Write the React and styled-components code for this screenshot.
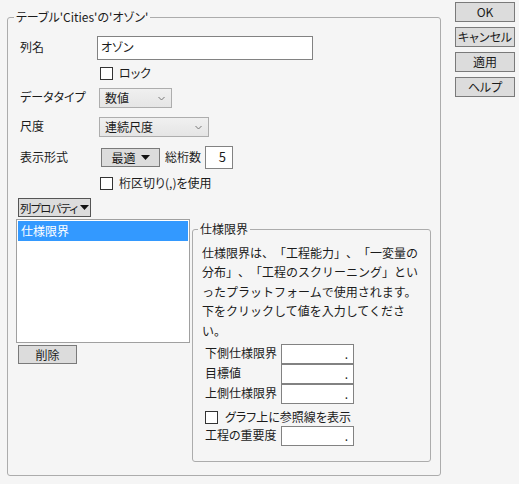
import React from 'react';
import styled, { createGlobalStyle } from 'styled-components';

const Global = createGlobalStyle`
  html, body { margin: 0; padding: 0; background: #f5f5f5; }
  body {
    font-family: "Noto Sans CJK JP", "Noto Sans", sans-serif;
    font-size: 12px;
    color: #1b1b1b;
    font-feature-settings: "palt";
  }
  * { box-sizing: border-box; }
`;

const Page = styled.div`
  display: flex;
  align-items: flex-start;
  width: 519px;
  height: 484px;
  padding-left: 7px;
`;

const Group = styled.div`
  position: relative;
  flex: none;
  border: 1px solid #acacac;
  border-radius: 3px;
  margin-top: ${p => p.$top}px;
  margin-left: ${p => p.$left || 0}px;
  width: ${p => p.$w}px;
  height: ${p => p.$h}px;
  padding: ${p => p.$pad};
`;

const GroupTitle = styled.span`
  position: absolute;
  top: -9px;
  left: ${p => p.$left}px;
  background: #f5f5f5;
  padding: 0 2px;
  line-height: 16px;
  white-space: nowrap;
`;

const Row = styled.div`
  display: flex;
  align-items: center;
  margin-top: ${p => p.$mt || 0}px;
  padding-left: ${p => p.$pl || 0}px;
  height: ${p => (p.$h ? `${p.$h}px` : 'auto')};
`;

const Label = styled.div`
  flex: none;
  width: ${p => p.$w}px;
  padding-bottom: 2px;
  line-height: 16px;
  white-space: nowrap;
`;

const TextBox = styled.div`
  flex: none;
  width: ${p => p.$w}px;
  height: ${p => p.$h}px;
  margin-left: ${p => p.$ml || 0}px;
  background: #fff;
  border: 1px solid #828282;
  display: flex;
  justify-content: ${p => (p.$right ? 'flex-end' : 'flex-start')};
  align-items: ${p => (p.$right ? 'flex-end' : 'flex-start')};
  padding: ${p => p.$pad || '1px 3px'};
  line-height: 16px;
  font-size: ${p => p.$fs || 12}px;
`;

const Dot = styled.span`
  font-size: 12px;
  line-height: 12px;
  color: #222;
`;

const CheckRow = styled.label`
  display: flex;
  align-items: center;
  margin-top: ${p => p.$mt || 0}px;
  margin-left: ${p => p.$ml || 0}px;
  height: 16px;
  line-height: 16px;
  white-space: nowrap;
`;

const Box = styled.span`
  flex: none;
  width: 13px;
  height: 13px;
  border: 1px solid #333;
  background: #fff;
  margin-right: ${p => p.$gap || 6}px;
`;

const Select = styled.div`
  flex: none;
  width: ${p => p.$w}px;
  height: 20px;
  margin-left: ${p => p.$ml || 0}px;
  border: 1px solid #adadad;
  background: linear-gradient(#f0f0f0, #e5e5e5);
  display: flex;
  align-items: center;
  justify-content: space-between;
  padding: 0 6px 0 5px;
  line-height: 16px;
`;

const Button = styled.div`
  flex: none;
  width: ${p => p.$w}px;
  height: ${p => p.$h || 20}px;
  margin-top: ${p => p.$mt || 0}px;
  margin-left: ${p => p.$ml || 0}px;
  border: 1px solid ${p => p.$border || '#7a7a7a'};
  background: #dcdcdc;
  display: flex;
  align-items: center;
  justify-content: ${p => (p.$start ? 'flex-start' : 'center')};
  gap: ${p => p.$gap || 5}px;
  padding: ${p => (p.$start ? '0 0 0 1px' : '0')};
  line-height: 16px;
  font-size: ${p => (p.$tight ? '11.5px' : '12px')};
  letter-spacing: ${p => (p.$tight ? '-0.9px' : 'normal')};
  white-space: nowrap;
  overflow: hidden;
`;

const SideColumn = styled.div`
  display: flex;
  flex-direction: column;
  gap: 5px;
  margin-top: 2px;
  margin-left: 14px;
`;

const Bottom = styled.div`
  display: flex;
  align-items: flex-start;
  margin-top: 2px;
`;

const LeftCol = styled.div`
  display: flex;
  flex-direction: column;
  align-items: flex-start;
`;

const List = styled.div`
  width: 174px;
  height: 124px;
  border: 1px solid #a0a0a0;
  background: #fff;
  padding: 1px;
`;

const ListItem = styled.div`
  height: 20px;
  line-height: 20px;
  padding-left: 3px;
  background: ${p => (p.$selected ? '#3399ff' : 'transparent')};
  color: ${p => (p.$selected ? '#fff' : 'inherit')};
`;

const Para = styled.p`
  margin: 0;
  line-height: 19.4px;
  white-space: nowrap;
  font-feature-settings: normal;
  text-spacing-trim: space-all;
`;

const Fields = styled.div`
  margin-top: 4px;
  display: flex;
  flex-direction: column;
`;

const Inline = styled.span`
  margin-left: ${p => p.$ml || 0}px;
  white-space: nowrap;
  line-height: 16px;
  padding-bottom: 1px;
`;

const Triangle = () => (
  <svg width="9" height="5" viewBox="0 0 9 5" style={{ flex: 'none' }}>
    <path d="M0 0 L9 0 L4.5 5 Z" fill="#111" />
  </svg>
);

const Chevron = () => (
  <svg width="7" height="5" viewBox="0 0 7 5">
    <path d="M0.5 1 L3.5 4 L6.5 1" fill="none" stroke="#777" strokeWidth="1" />
  </svg>
);

const NumField = ({ label }) => (
  <Row $pl={3}>
    <Label $w={76}>{label}</Label>
    <TextBox $w={73} $h={20} $right $pad="0 5px 3px 3px">
      <Dot>.</Dot>
    </TextBox>
  </Row>
);

export default function App() {
  return (
    <>
      <Global />
      <Page>
        <Group $top={17} $w={434} $h={459} $pad="0 0 0 8px">
          <GroupTitle $left={6}>テーブル'Cities'の'オゾン'</GroupTitle>

          <Row $mt={18} $pl={4} $h={24}>
            <Label $w={77}>列名</Label>
            <TextBox $w={216} $h={24} $pad="2px 3px">オゾン</TextBox>
          </Row>

          <CheckRow $mt={5} $ml={84}>
            <Box />
            ロック
          </CheckRow>

          <Row $mt={7} $pl={4} $h={20}>
            <Label $w={79}>データタイプ</Label>
            <Select $w={73}>
              <span>数値</span>
              <Chevron />
            </Select>
          </Row>

          <Row $mt={9} $pl={4} $h={20}>
            <Label $w={79}>尺度</Label>
            <Select $w={110}>
              <span>連続尺度</span>
              <Chevron />
            </Select>
          </Row>

          <Row $mt={9} $pl={4} $h={23}>
            <Label $w={81}>表示形式</Label>
            <Button $w={59} $h={19}>
              <span>最適</span>
              <Triangle />
            </Button>
            <Inline $ml={5}>総桁数</Inline>
            <TextBox $w={28} $h={23} $ml={4} $right $pad="0 6px 3px 0" $fs={13}>5</TextBox>
          </Row>

          <CheckRow $mt={6} $ml={84}>
            <Box />
            桁区切り(,)を使用
          </CheckRow>

          <Button $w={73} $h={19} $mt={7} $ml={2} $border="#555" $gap={3} $start $tight>
            <span>列プロパティ</span>
            <Triangle />
          </Button>

          <Bottom>
            <LeftCol>
              <List>
                <ListItem $selected>仕様限界</ListItem>
              </List>
              <Button $w={59} $h={19} $mt={2} $ml={2}>削除</Button>
            </LeftCol>

            <Group $top={10} $left={2} $w={239} $h={233} $pad="13px 0 0 9px">
              <GroupTitle $left={5}>仕様限界</GroupTitle>
              <Para>
                仕様限界は、「工程能力」、「一変量の<br />
                分布」、「工程のスクリーニング」とい<br />
                ったプラットフォームで使用されます。<br />
                下をクリックして値を入力してくださ<br />
                い。
              </Para>
              <Fields>
                <NumField label="下側仕様限界" />
                <NumField label="目標値" />
                <NumField label="上側仕様限界" />
                <CheckRow $mt={5} $ml={3}>
                  <Box $gap={7} />
                  グラフ上に参照線を表示
                </CheckRow>
                <Row $mt={1} $pl={0}>
                  <NumField label="工程の重要度" />
                </Row>
              </Fields>
            </Group>
          </Bottom>
        </Group>

        <SideColumn>
          <Button $w={60}>OK</Button>
          <Button $w={60}>キャンセル</Button>
          <Button $w={60}>適用</Button>
          <Button $w={60}>ヘルプ</Button>
        </SideColumn>
      </Page>
    </>
  );
}
